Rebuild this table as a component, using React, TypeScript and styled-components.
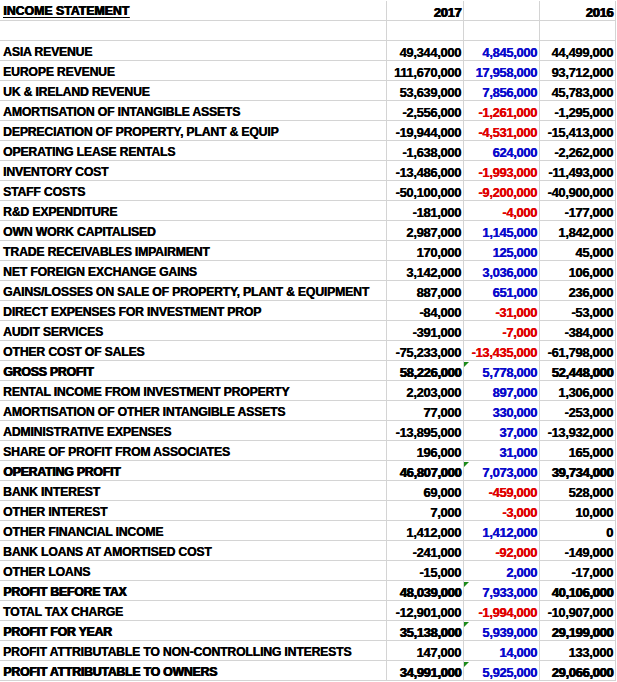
import React from "react";
import styled, { createGlobalStyle, css } from "styled-components";

const GlobalStyle = createGlobalStyle`
  html, body { margin: 0; padding: 0; background: #ffffff; }
  body { font-family: "Liberation Sans", Arial, sans-serif; }
`;

type Row = { label: string; b: string; c: string; d: string; heavy?: boolean };

const rows: Row[] = [
  { label: "ASIA REVENUE", b: "49,344,000", c: "4,845,000", d: "44,499,000" },
  { label: "EUROPE REVENUE", b: "111,670,000", c: "17,958,000", d: "93,712,000" },
  { label: "UK & IRELAND REVENUE", b: "53,639,000", c: "7,856,000", d: "45,783,000" },
  { label: "AMORTISATION OF INTANGIBLE ASSETS", b: "-2,556,000", c: "-1,261,000", d: "-1,295,000" },
  { label: "DEPRECIATION OF PROPERTY, PLANT & EQUIP", b: "-19,944,000", c: "-4,531,000", d: "-15,413,000" },
  { label: "OPERATING LEASE RENTALS", b: "-1,638,000", c: "624,000", d: "-2,262,000" },
  { label: "INVENTORY COST", b: "-13,486,000", c: "-1,993,000", d: "-11,493,000" },
  { label: "STAFF COSTS", b: "-50,100,000", c: "-9,200,000", d: "-40,900,000" },
  { label: "R&D EXPENDITURE", b: "-181,000", c: "-4,000", d: "-177,000" },
  { label: "OWN WORK CAPITALISED", b: "2,987,000", c: "1,145,000", d: "1,842,000" },
  { label: "TRADE RECEIVABLES IMPAIRMENT", b: "170,000", c: "125,000", d: "45,000" },
  { label: "NET FOREIGN EXCHANGE GAINS", b: "3,142,000", c: "3,036,000", d: "106,000" },
  { label: "GAINS/LOSSES ON SALE OF PROPERTY, PLANT & EQUIPMENT", b: "887,000", c: "651,000", d: "236,000" },
  { label: "DIRECT EXPENSES FOR INVESTMENT PROP", b: "-84,000", c: "-31,000", d: "-53,000" },
  { label: "AUDIT SERVICES", b: "-391,000", c: "-7,000", d: "-384,000" },
  { label: "OTHER COST OF SALES", b: "-75,233,000", c: "-13,435,000", d: "-61,798,000" },
  { label: "GROSS PROFIT", b: "58,226,000", c: "5,778,000", d: "52,448,000", heavy: true },
  { label: "RENTAL INCOME FROM INVESTMENT PROPERTY", b: "2,203,000", c: "897,000", d: "1,306,000" },
  { label: "AMORTISATION OF OTHER INTANGIBLE ASSETS", b: "77,000", c: "330,000", d: "-253,000" },
  { label: "ADMINISTRATIVE EXPENSES", b: "-13,895,000", c: "37,000", d: "-13,932,000" },
  { label: "SHARE OF PROFIT FROM ASSOCIATES", b: "196,000", c: "31,000", d: "165,000" },
  { label: "OPERATING PROFIT", b: "46,807,000", c: "7,073,000", d: "39,734,000", heavy: true },
  { label: "BANK INTEREST", b: "69,000", c: "-459,000", d: "528,000" },
  { label: "OTHER INTEREST", b: "7,000", c: "-3,000", d: "10,000" },
  { label: "OTHER FINANCIAL INCOME", b: "1,412,000", c: "1,412,000", d: "0" },
  { label: "BANK LOANS AT AMORTISED COST", b: "-241,000", c: "-92,000", d: "-149,000" },
  { label: "OTHER LOANS", b: "-15,000", c: "2,000", d: "-17,000" },
  { label: "PROFIT BEFORE TAX", b: "48,039,000", c: "7,933,000", d: "40,106,000", heavy: true },
  { label: "TOTAL TAX CHARGE", b: "-12,901,000", c: "-1,994,000", d: "-10,907,000" },
  { label: "PROFIT FOR YEAR", b: "35,138,000", c: "5,939,000", d: "29,199,000", heavy: true },
  { label: "PROFIT ATTRIBUTABLE TO NON-CONTROLLING INTERESTS", b: "147,000", c: "14,000", d: "133,000" },
  { label: "PROFIT ATTRIBUTABLE TO OWNERS", b: "34,991,000", c: "5,925,000", d: "29,066,000", heavy: true },
];

const normalText = css`
  text-shadow: 0.3px 0 0 currentColor;
`;

const heavyText = css`
  text-shadow: 0.8px 0 0 currentColor, 0.4px 0 0 currentColor;
`;

const Sheet = styled.div`
  width: 616px;
  padding-top: 1px;
  display: flex;
  flex-direction: column;
`;

const SheetRow = styled.div`
  display: grid;
  grid-template-columns: 387px 77px 76px 76px;
  height: 20px;
  box-sizing: border-box;
  border-bottom: 1px solid #d4d4d4;
`;

const Cell = styled.div`
  position: relative;
  height: 19px;
  box-sizing: border-box;
  border-right: 1px solid #d4d4d4;
  display: flex;
  align-items: flex-end;
  padding-bottom: 0;
  overflow: visible;
  white-space: nowrap;
`;

const LabelCell = styled(Cell)<{ $heavy?: boolean; $title?: boolean }>`
  padding-left: 3px;
  font-family: "Liberation Sans", Arial, sans-serif;
  font-weight: 700;
  font-size: 12.3px;
  line-height: 15px;
  letter-spacing: -0.22px;
  color: #000;
  ${normalText}
  ${(p) => (p.$heavy || p.$title) && heavyText}
  ${(p) =>
    p.$title &&
    css`
      letter-spacing: 0px;
      padding-bottom: 1px;
    `}
`;

const Underlined = styled.span`
  text-decoration: underline;
  text-decoration-thickness: 1px;
  text-underline-offset: 2px;
`;

const NumCell = styled(Cell)<{ $heavy?: boolean; $tone?: "black" | "blue" | "red" }>`
  justify-content: flex-end;
  padding-right: 2px;
  font-family: "Liberation Sans", Arial, sans-serif;
  font-weight: 700;
  font-size: 13px;
  line-height: 15px;
  letter-spacing: -0.35px;
  color: ${(p) => (p.$tone === "blue" ? "#0a0acc" : p.$tone === "red" ? "#e00000" : "#000")};
  ${normalText}
  ${(p) => p.$heavy && heavyText}
`;

const ErrorMark = styled.span`
  position: absolute;
  top: 1px;
  left: 0;
  width: 0;
  height: 0;
  border-top: 5px solid #1a8a1a;
  border-right: 5px solid transparent;
`;

function tone(v: string): "blue" | "red" {
  return v.trim().startsWith("-") ? "red" : "blue";
}

export default function App() {
  return (
    <>
      <GlobalStyle />
      <Sheet>
        <SheetRow>
          <LabelCell $title>
            <Underlined>INCOME STATEMENT</Underlined>
          </LabelCell>
          <NumCell $heavy>2017</NumCell>
          <NumCell />
          <NumCell $heavy>2016</NumCell>
        </SheetRow>
        <SheetRow>
          <LabelCell />
          <NumCell />
          <NumCell />
          <NumCell />
        </SheetRow>
        {rows.map((r) => (
          <SheetRow key={r.label}>
            <LabelCell $heavy={r.heavy}>{r.label}</LabelCell>
            <NumCell $heavy={r.heavy}>{r.b}</NumCell>
            <NumCell $tone={tone(r.c)}>
              {r.heavy && <ErrorMark />}
              {r.c}
            </NumCell>
            <NumCell $heavy={r.heavy}>{r.d}</NumCell>
          </SheetRow>
        ))}
      </Sheet>
    </>
  );
}
